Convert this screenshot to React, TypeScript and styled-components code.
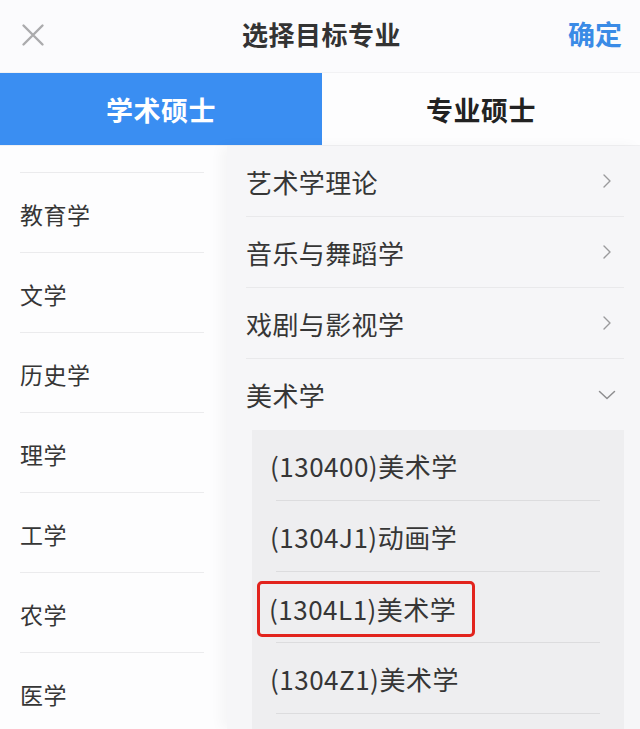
import React from 'react';
import styled, { createGlobalStyle } from 'styled-components';

const GlobalStyle = createGlobalStyle`
  html, body {
    margin: 0;
    padding: 0;
    background: #fbfbfd;
  }
  body {
    font-family: "Noto Sans CJK SC", "Noto Sans", sans-serif;
    color: #333;
  }
`;

const Page = styled.div`
  width: 640px;
  height: 729px;
  overflow: hidden;
  display: flex;
  flex-direction: column;
  background: #fbfbfd;
`;

const Header = styled.div`
  height: 73px;
  flex: none;
  display: grid;
  grid-template-columns: 1fr auto 1fr;
  align-items: center;
  padding: 0 18px 0 21px;
  box-sizing: border-box;
  border-bottom: 1px solid #f2f2f4;
`;

const CloseButton = styled.button`
  justify-self: start;
  width: 24px;
  height: 24px;
  padding: 0;
  border: none;
  background: none;
  display: flex;
  align-items: center;
  justify-content: center;
  margin-top: -3px;
`;

const Title = styled.div`
  font-size: 26px;
  font-weight: 600;
  color: #333;
  letter-spacing: 0.5px;
  margin-top: -6px;
`;

const Confirm = styled.div`
  justify-self: end;
  font-size: 27px;
  font-weight: 700;
  color: #3a8be6;
  margin-top: -6px;
`;

const TabBar = styled.div`
  height: 72px;
  flex: none;
  display: grid;
  grid-template-columns: 322px 1fr;
  border-bottom: 1px solid #f0f0f2;
`;

const Tab = styled.div<{ active?: boolean }>`
  display: flex;
  align-items: center;
  justify-content: center;
  font-size: 27px;
  font-weight: 700;
  letter-spacing: 0.5px;
  background: ${p => (p.active ? '#3a8ef2' : '#fdfdfe')};
  color: ${p => (p.active ? '#ffffff' : '#222')};
`;

const Body = styled.div`
  flex: 1;
  display: flex;
  min-height: 0;
`;

const CategoryList = styled.div`
  width: 227px;
  flex: none;
  padding-top: 26px;
  background: #fdfdfe;
`;

const Category = styled.div`
  height: 80px;
  margin: 0 23px 0 20px;
  border-top: 1px solid #ebebed;
  display: flex;
  align-items: center;
  font-size: 23px;
  letter-spacing: 0.5px;
  color: #363636;
  padding-top: 3px;
  box-sizing: border-box;
`;

const RightPanel = styled.div`
  flex: 1;
  position: relative;
  background: #f6f6f8;
  box-shadow: -6px 0 12px rgba(0, 0, 0, 0.035);
  padding: 0 16px 0 19px;
`;

const MajorRow = styled.div<{ last?: boolean }>`
  height: 71px;
  box-sizing: border-box;
  display: flex;
  align-items: center;
  justify-content: space-between;
  border-bottom: ${p => (p.last ? 'none' : '1px solid #e9e9eb')};
  font-size: 26px;
  letter-spacing: 0.4px;
  color: #363636;
  padding-right: ${p => (p.last ? '8px' : '12px')};
`;

const SubPanel = styled.div`
  margin-left: 6px;
  background: #eeeef0;
  padding-bottom: 20px;
`;

const SubRow = styled.div`
  height: 70px;
  display: flex;
  align-items: center;
  padding-left: 18px;
  font-size: 26px;
  letter-spacing: 0.5px;
  color: #363636;
`;

const Divider = styled.div`
  height: 1px;
  margin: 0 24px;
  background: #dcdcde;
`;

const Highlight = styled.span`
  display: inline-flex;
  align-items: center;
  height: 56px;
  box-sizing: border-box;
  margin-left: -13px;
  margin-top: 3px;
  padding: 0 16px 0 9px;
  border: 3.5px solid #e2231d;
  border-radius: 5px;
`;

const ChevronRight = () => (
  <svg width="10" height="16" viewBox="0 0 10 16" fill="none">
    <path d="M2 2l6 6-6 6" stroke="#9a9a9c" strokeWidth="1.4" strokeLinecap="round" strokeLinejoin="round" />
  </svg>
);

const ChevronDown = () => (
  <svg width="18" height="10" viewBox="0 0 18 10" fill="none">
    <path d="M1.5 1.5l7.5 7 7.5-7" stroke="#8e8e90" strokeWidth="1.5" strokeLinecap="round" strokeLinejoin="round" />
  </svg>
);

const categories = ['教育学', '文学', '历史学', '理学', '工学', '农学', '医学'];
const majors = ['艺术学理论', '音乐与舞蹈学', '戏剧与影视学'];
const subMajors = [
  { label: '(130400)美术学' },
  { label: '(1304J1)动画学' },
  { label: '(1304L1)美术学', marked: true },
  { label: '(1304Z1)美术学' },
  { label: '' },
];

export default function App() {
  return (
    <>
      <GlobalStyle />
      <Page>
        <Header>
          <CloseButton>
            <svg width="24" height="24" viewBox="0 0 24 24" fill="none">
              <path d="M2.5 2.5l19 19M21.5 2.5l-19 19" stroke="#ababad" strokeWidth="2.4" strokeLinecap="round" />
            </svg>
          </CloseButton>
          <Title>选择目标专业</Title>
          <Confirm>确定</Confirm>
        </Header>
        <TabBar>
          <Tab active>学术硕士</Tab>
          <Tab>专业硕士</Tab>
        </TabBar>
        <Body>
          <CategoryList>
            {categories.map(c => (
              <Category key={c}>{c}</Category>
            ))}
          </CategoryList>
          <RightPanel>
            {majors.map(m => (
              <MajorRow key={m}>
                {m}
                <ChevronRight />
              </MajorRow>
            ))}
            <MajorRow last>
              美术学
              <ChevronDown />
            </MajorRow>
            <SubPanel>
              {subMajors.map((s, i) => (
                <React.Fragment key={i}>
                  <SubRow>{s.marked ? <Highlight>{s.label}</Highlight> : s.label}</SubRow>
                  {i < subMajors.length - 1 && <Divider />}
                </React.Fragment>
              ))}
            </SubPanel>
          </RightPanel>
        </Body>
      </Page>
    </>
  );
}
